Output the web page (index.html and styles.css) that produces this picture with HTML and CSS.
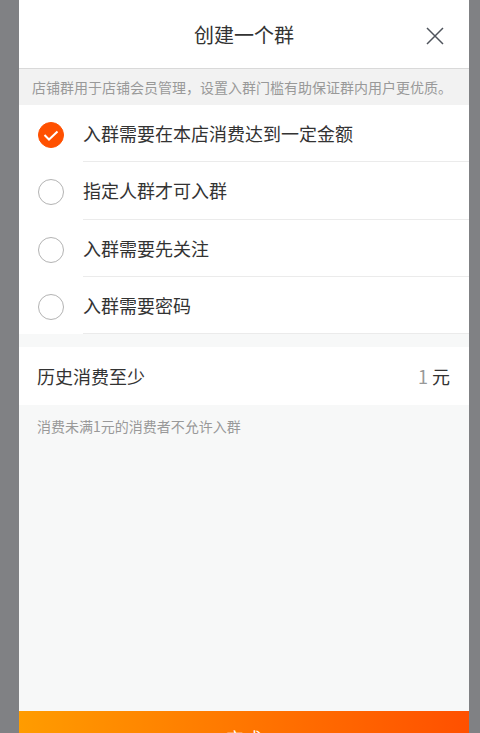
FILE: index.html
```html
<!DOCTYPE html>
<html>
<head>
<meta charset="utf-8">
<title>创建一个群</title>
<link rel="stylesheet" href="styles.css">
</head>
<body>
<div id="panel">
    <div id="header">
        <h3 class="title">创建一个群</h3>
        <div class="close">
            <svg width="18" height="18" viewBox="0 0 18 18"><path d="M1 1L17 17M17 1L1 17" stroke="#4f545c" stroke-width="1.5" fill="none"/></svg>
        </div>
    </div>
    <div class="notice">店铺群用于店铺会员管理，设置入群门槛有助保证群内用户更优质。</div>
    <ul id="options">
        <li class="option checked">
            <span class="radio">
                <svg width="26" height="26" viewBox="0 0 26 26"><polyline points="6.5,13 11,17.5 19.5,9.5" stroke="#fff" stroke-width="2" fill="none"/></svg>
            </span>
            <span class="label">入群需要在本店消费达到一定金额</span>
        </li>
        <li class="option">
            <span class="radio"></span>
            <span class="label">指定人群才可入群</span>
        </li>
        <li class="option">
            <span class="radio"></span>
            <span class="label">入群需要先关注</span>
        </li>
        <li class="option">
            <span class="radio"></span>
            <span class="label">入群需要密码</span>
        </li>
    </ul>
    <div class="amount">
        <span class="amount-name">历史消费至少</span>
        <span class="amount-value"><span class="num">1</span> 元</span>
    </div>
    <div class="hint">消费未满1元的消费者不允许入群</div>
    <div id="done">完成</div>
</div>
</body>
</html>
```

FILE: styles.css
```css
html, body {
    margin: 0;
    height: 100%;
    overflow: hidden;
    background-color: #808184;
    font-family: "Noto Sans CJK SC", "Liberation Sans", sans-serif;
    color: #333;
}
#panel {
    width: 450px;
    margin-left: 19px;
    background-color: #f7f8f8;
}
#header {
    height: 68px;
    background-color: #fff;
    border-bottom: 1px solid #d9d9d9;
    display: flex;
    align-items: center;
    justify-content: center;
    position: relative;
}
#header .title {
    margin: 0;
    font-size: 20px;
    font-weight: normal;
    color: #333;
}
#header .close {
    position: absolute;
    right: 25px;
    top: 27px;
    width: 18px;
    height: 18px;
}
#header .close svg {
    display: block;
}
.notice {
    height: 36px;
    line-height: 36px;
    padding-left: 13px;
    font-size: 14px;
    color: #999;
    background-color: #f2f2f2;
    white-space: nowrap;
}
#options {
    list-style: none;
    margin: 0;
    padding: 0;
    background-color: #fff;
}
#options .option {
    display: flex;
    align-items: center;
    height: 57.25px;
}
#options .radio {
    flex: none;
    width: 24px;
    height: 24px;
    margin: 3px 19px 0 19px;
    border: 1px solid #b3b3b3;
    border-radius: 50%;
}
#options .radio svg {
    display: block;
    margin: -1px;
}
#options .checked .radio {
    background-color: #ff5000;
    border-color: #ff5000;
}
#options .label {
    flex: 1;
    height: 100%;
    box-sizing: border-box;
    display: flex;
    align-items: center;
    font-size: 18px;
    border-bottom: 1px solid #ebebeb;
}
.amount {
    margin-top: 13px;
    height: 58px;
    padding: 0 19px 0 18px;
    background-color: #fff;
    display: flex;
    align-items: center;
    justify-content: space-between;
    font-size: 18px;
}
.amount .num {
    color: #999;
}
.hint {
    height: 306px;
    padding: 11px 0 0 18px;
    box-sizing: border-box;
    font-size: 14px;
    color: #999;
}
#done {
    height: 54px;
    padding-top: 14px;
    box-sizing: border-box;
    text-align: center;
    font-size: 18px;
    color: #fff;
    background: linear-gradient(to right, #ff9c00, #ff5000);
}
```
